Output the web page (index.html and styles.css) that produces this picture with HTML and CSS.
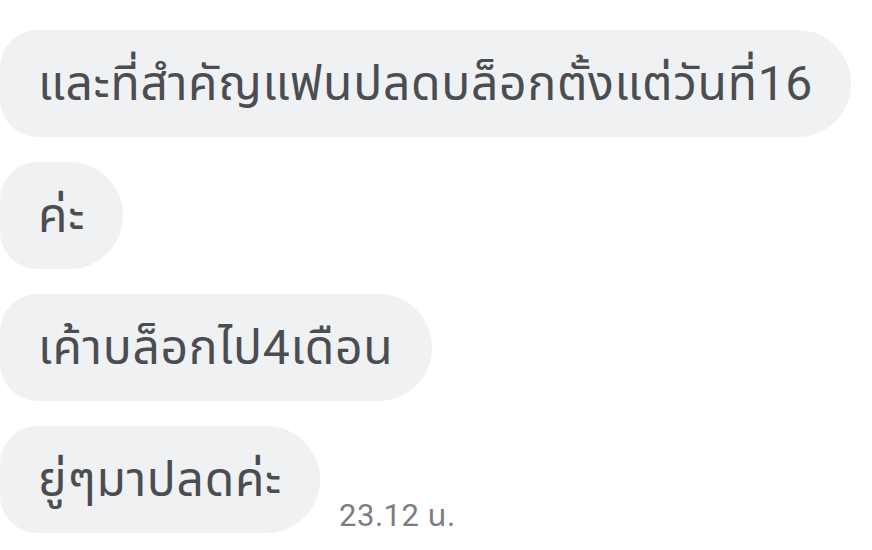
FILE: index.html
```html
<!DOCTYPE html>
<html lang="th">
<head>
<meta charset="utf-8">
<link rel="stylesheet" href="styles.css">
</head>
<body>
<div class="thread">
  <div class="row"><div class="bubble">และที่สำคัญแฟนปลดบล็อกตั้งแต่วันที่16</div></div>
  <div class="row"><div class="bubble">ค่ะ</div></div>
  <div class="row"><div class="bubble">เค้าบล็อกไป4เดือน</div></div>
  <div class="row"><div class="bubble">ยู่ๆมาปลดค่ะ</div><span class="time">23.12 น.</span></div>
</div>
</body>
</html>
```
FILE: styles.css
```css
html, body {
  margin: 0;
  background: #ffffff;
}
body {
  width: 872px;
  height: 550px;
  overflow: hidden;
  font-family: Roboto, "Noto Sans Thai", "Noto Sans", sans-serif;
}
.thread {
  display: flex;
  flex-direction: column;
  gap: 25px;
  padding-top: 30px;
}
.row {
  display: flex;
  align-items: flex-end;
}
.bubble {
  background: #f0f1f3;
  color: #4a4d52;
  font-size: 48px;
  letter-spacing: 0.7px;
  line-height: 1;
  height: 107px;
  box-sizing: border-box;
  display: flex;
  align-items: center;
  padding: 0 38px 0 38px;
  border-radius: 38px 54px 54px 38px;
  white-space: nowrap;
}
.time {
  color: #7a7e84;
  font-size: 31px;
  line-height: 1;
  letter-spacing: 0.5px;
  margin-left: 19px;
  margin-bottom: 2px;
}
```
